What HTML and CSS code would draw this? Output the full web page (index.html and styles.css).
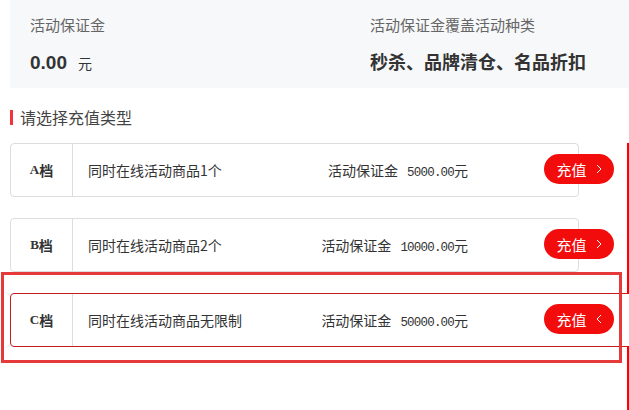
FILE: index.html
```html
<!DOCTYPE html>
<html>
<head>
  <meta charset="UTF-8">
  <title>活动保证金充值</title>
  <link rel="stylesheet" href="styles.css">
</head>
<body>

<div class="page">
  <!-- 保证金概况 -->
  <div class="summary">
    <div class="summary-col summary-left">
      <div class="summary-label">活动保证金</div>
      <div class="summary-value"><span class="amount">0.00</span><span class="unit">元</span></div>
    </div>
    <div class="summary-col">
      <div class="summary-label">活动保证金覆盖活动种类</div>
      <div class="summary-value">秒杀、品牌清仓、名品折扣</div>
    </div>
  </div>

  <h2 class="section-title">请选择充值类型</h2>

  <!-- 充值档位 -->
  <div class="tier-list">
    <div class="tier-card">
      <div class="tier-name"><span class="latin">A</span>档</div>
      <div class="tier-body">
        <span class="tier-desc">同时在线活动商品1个</span>
        <span class="tier-amount">活动保证金<span class="num">5000.00</span>元</span>
      </div>
      <button class="btn-charge">充值
        <svg width="6" height="10" viewBox="0 0 6 10"><polyline points="1,1 5,5 1,9" fill="none" stroke="#fff" stroke-width="1"/></svg>
      </button>
    </div>

    <div class="tier-card">
      <div class="tier-name"><span class="latin">B</span>档</div>
      <div class="tier-body">
        <span class="tier-desc">同时在线活动商品2个</span>
        <span class="tier-amount">活动保证金<span class="num">10000.00</span>元</span>
      </div>
      <button class="btn-charge">充值
        <svg width="6" height="10" viewBox="0 0 6 10"><polyline points="1,1 5,5 1,9" fill="none" stroke="#fff" stroke-width="1"/></svg>
      </button>
    </div>

    <div class="tier-card active">
      <div class="tier-name"><span class="latin">C</span>档</div>
      <div class="tier-body">
        <span class="tier-desc">同时在线活动商品无限制</span>
        <span class="tier-amount">活动保证金<span class="num">50000.00</span>元</span>
      </div>
      <button class="btn-charge">充值
        <svg width="6" height="10" viewBox="0 0 6 10"><polyline points="5,1 1,5 5,9" fill="none" stroke="#fff" stroke-width="1"/></svg>
      </button>
    </div>
  </div>
</div>

<!-- repères rouges par-dessus la capture -->
<div class="mark-box"></div>
<div class="mark-line mark-line-top"></div>
<div class="mark-line mark-line-bottom"></div>

</body>
</html>
```

FILE: styles.css
```css
/* --- BASE --- */
* {
  margin: 0;
  padding: 0;
  box-sizing: border-box;
}
html, body {
  height: 100%;
  overflow: hidden;
}
body {
  position: relative;
  background: #fff;
  color: #333;
  font-family: "Noto Sans CJK SC", "Liberation Sans", sans-serif;
}

.page {
  padding-left: 10px;
  overflow: hidden;
}

/* --- SUMMARY --- */
.summary {
  display: flex;
  height: 88px;
  padding: 14px 20px 0;
  background: #f7f8fa;
}
.summary-left {
  width: 340px;
}
.summary-label {
  font-size: 15px;
  line-height: 22px;
  color: #666;
}
.summary-value {
  margin-top: 13px;
  font-size: 18px;
  line-height: 24px;
  font-weight: bold;
  color: #333;
}
.amount {
  font-family: "Liberation Sans", sans-serif;
  font-size: 19px;
}
.unit {
  margin-left: 11px;
  font-size: 14px;
  font-weight: normal;
}

/* --- SECTION TITLE --- */
.section-title {
  margin-top: 22px;
  padding-left: 7px;
  border-left: 3px solid #f2333b;
  font-size: 16px;
  font-weight: normal;
  line-height: 15px;
  color: #444;
}

/* --- TIERS --- */
.tier-list {
  margin-top: 18px;
}
.tier-card {
  display: flex;
  align-items: center;
  width: 569px;
  height: 54px;
  margin-bottom: 21px;
  border: 1px solid #ddd;
  border-radius: 4px;
  background: #fff;
  font-size: 14px;
}
.tier-card.active {
  width: 640px;
  border-color: #c81c1c;
}
.tier-name {
  flex-shrink: 0;
  width: 62px;
  height: 100%;
  display: flex;
  align-items: center;
  justify-content: center;
  border-right: 1px solid #ddd;
  font-weight: bold;
  color: #333;
}
.latin {
  font-family: "Liberation Serif", serif;
  font-size: 13px;
}
.tier-body {
  flex-shrink: 0;
  width: 395px;
  display: flex;
  justify-content: space-between;
  padding-left: 15px;
  color: #333;
}
.num {
  margin-left: 9px;
  font-family: "Liberation Mono", monospace;
  font-size: 12.5px;
  letter-spacing: -0.8px;
}

.btn-charge {
  flex-shrink: 0;
  display: flex;
  align-items: center;
  justify-content: center;
  gap: 9px;
  width: 70px;
  height: 30px;
  margin-left: 76px;
  margin-top: -2px;
  border: none;
  border-radius: 15px;
  background: #f20c0c;
  color: #fff;
  font-family: inherit;
  font-size: 15px;
  cursor: pointer;
}

/* --- RED MARKS --- */
.mark-box {
  position: absolute;
  left: 1px;
  top: 272px;
  width: 621px;
  height: 91px;
  border: 3px solid #e63a3a;
}
.mark-line {
  position: absolute;
  left: 627px;
  width: 2px;
  background: #f00;
}
.mark-line-top {
  top: 143px;
  height: 151px;
}
.mark-line-bottom {
  top: 346px;
  height: 70px;
}
```
